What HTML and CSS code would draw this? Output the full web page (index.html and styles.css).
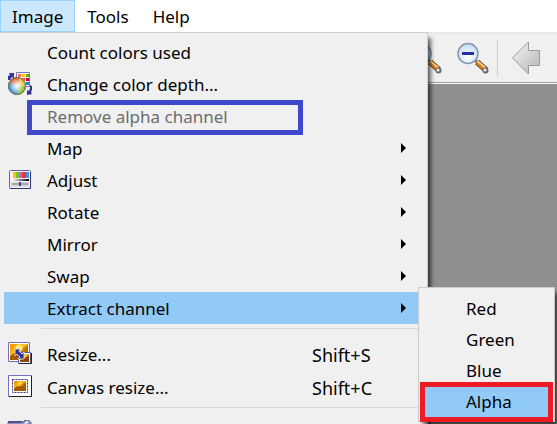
FILE: index.html
```html
<!DOCTYPE html>
<html lang="en">
<head>
<meta charset="utf-8">
<title>Image menu</title>
<link rel="stylesheet" href="styles.css">
</head>
<body>
<svg class="defs" aria-hidden="true">
  <defs>
    <linearGradient id="gold" x1="0" y1="0" x2="1" y2="1"><stop offset="0" stop-color="#f08c00"/><stop offset=".45" stop-color="#ffc61a"/><stop offset=".55" stop-color="#c87800"/><stop offset="1" stop-color="#7c3c00"/></linearGradient>
    <linearGradient id="silver" x1="0" y1="0" x2="1" y2="1"><stop offset="0" stop-color="#f6f6f6"/><stop offset="1" stop-color="#b4b4b4"/></linearGradient>
    <linearGradient id="ramp"><stop offset="0" stop-color="#fff"/><stop offset="1" stop-color="#000"/></linearGradient>
    <radialGradient id="lens" cx=".5" cy=".65" r=".6"><stop offset="0" stop-color="#fff"/><stop offset="1" stop-color="#c3dff5"/></radialGradient>
    <radialGradient id="shine" cx=".5" cy=".5" r=".5"><stop offset="0" stop-color="#fff"/><stop offset=".3" stop-color="#fff" stop-opacity=".75"/><stop offset="1" stop-color="#fff" stop-opacity="0"/></radialGradient>
    <symbol id="magnifier" viewBox="0 0 32 32">
      <path d="M18 18L22 22" stroke="#777" stroke-width="3"/>
      <path d="M20 20L29 28" stroke="#7a4a18" stroke-width="6"/>
      <path d="M20 20L28 27" stroke="#d98020" stroke-width="4"/>
      <path d="M20.500 19L28 25.500" stroke="#ffe0a8" stroke-width="1.500"/>
      <circle cx="28.500" cy="28.500" r="3" fill="#666b70"/><circle cx="28" cy="28" r="1.500" fill="#eee"/>
      <circle cx="11" cy="11.500" r="10" fill="url(#lens)" stroke="#8794a8" stroke-width="1.500"/>
      <path d="M5 11.500h12" stroke="#2c2c9c" stroke-width="3"/>
    </symbol>
  </defs>
</svg>
<nav class="menubar">
  <button class="menubar-item is-open">Image</button>
  <button class="menubar-item">Tools</button>
  <button class="menubar-item">Help</button>
  <ul class="menu">
    <li><button class="item"><span class="label">Count colors used</span></button></li>
    <li><button class="item"><svg class="icon" viewBox="0 0 24 24">
      <path d="M8.500 .5h13v14h-13z" fill="#fff" stroke="#7475b5"/>
      <path d="M10 2h3v3h-3z" fill="#ff6a5a"/><path d="M14 2h3v3h-3z" fill="#ffc20e"/><path d="M18 2h3v3h-3z" fill="#62ae12"/>
      <path d="M10 6h3v3h-3z" fill="#ffae92"/><path d="M14 6h3v3h-3z" fill="#f44"/><path d="M18 6h3v3h-3z" fill="#c00032"/>
      <path d="M18 10h3v3h-3z" fill="#247bd0"/>
      <circle cx="9" cy="14" r="9" fill="#d6b02c"/>
      <path d="M9 14L1 10A9 9 0 0 1 12 5.500z" fill="#d85a20"/><path d="M9 14L12 5.500A9 9 0 0 1 18 14z" fill="#dfb52f"/>
      <path d="M9 14h9a9 9 0 0 1-9 9z" fill="#77b52b"/><path d="M9 14v9a9 9 0 0 1-8-13z" fill="#3a8ccb"/>
      <circle cx="9" cy="14" r="8.500" fill="url(#shine)" stroke="#77705a"/>
      <path d="M0 8V4l2-1-1-2h5v5L4 5 2 8zM19 23v-5l2 1 1-3V13l2 1v4l-1 2 1 2z" fill="#33359c"/>
    </svg><span class="label">Change color depth...</span></button></li>
    <li class="marked"><button class="item" disabled><span class="label">Remove alpha channel</span></button></li>
    <li><button class="item"><span class="label">Map</span><svg class="arrow" viewBox="0 0 5 10"><path d="M0 0l5 5-5 5z"/></svg></button></li>
    <li><button class="item"><svg class="icon" viewBox="0 0 24 24">
      <rect x="1.500" y="2.500" width="21" height="18" rx="1" fill="#f2f2f6" stroke="#6163a8"/>
      <path d="M2 20.500h20.500V4" fill="none" stroke="#303275"/>
      <path d="M5 4h3v6H5z" fill="#ffc400"/><path d="M8 4h3v6H8z" fill="#71c42d"/><path d="M11 4h3v6h-3z" fill="#d35bd8"/><path d="M14 4h4v6h-4z" fill="#ec3340"/><path d="M18 4h3v6h-3z" fill="#3c9bdc"/>
      <path d="M4 11h17v2H4z" fill="url(#ramp)"/><path d="M3 14h18v5H3z" fill="#d8d8d8"/><path d="M4 16h16" stroke="#777"/><path d="M11 14h2v4h-2z" fill="#3f43a8"/>
    </svg><span class="label">Adjust</span><svg class="arrow" viewBox="0 0 5 10"><path d="M0 0l5 5-5 5z"/></svg></button></li>
    <li><button class="item"><span class="label">Rotate</span><svg class="arrow" viewBox="0 0 5 10"><path d="M0 0l5 5-5 5z"/></svg></button></li>
    <li><button class="item"><span class="label">Mirror</span><svg class="arrow" viewBox="0 0 5 10"><path d="M0 0l5 5-5 5z"/></svg></button></li>
    <li><button class="item"><span class="label">Swap</span><svg class="arrow" viewBox="0 0 5 10"><path d="M0 0l5 5-5 5z"/></svg></button></li>
    <li class="parent"><button class="item is-active"><span class="label">Extract channel</span><svg class="arrow" viewBox="0 0 5 10"><path d="M0 0l5 5-5 5z"/></svg></button>
      <ul class="submenu">
        <li><button class="item">Red</button></li>
        <li><button class="item">Green</button></li>
        <li><button class="item">Blue</button></li>
        <li class="marked-red"><button class="item is-active">Alpha</button></li>
      </ul>
    </li>
    <li class="separator"></li>
    <li><button class="item tall"><svg class="icon" viewBox="0 0 24 24">
      <path d="M.5 .5h21v19H.5z" fill="#fff" stroke="#7071b4"/><path d="M2 2h18v16H2z" fill="url(#gold)"/>
      <circle cx="11" cy="6" r="3.500" fill="#ffe97a"/><path d="M2 14l6-4 4 3v5H2z" fill="#a55a00"/>
      <path d="M10.500 10.500h12v11h-12z" fill="#fff" stroke="#55579f"/><path d="M11 21.500h12.500V11" fill="none" stroke="#222"/>
      <path d="M12 12h9v8h-9z" fill="url(#gold)"/><path d="M12 18l5-2 4-2v6h-9z" fill="#8b4700"/>
      <path d="M7 7h6l-2 2 3 3 2-2v7h-6l2-2-3-3-2 2z" fill="#30349c" stroke="#fff" stroke-width=".7"/>
    </svg><span class="label">Resize...</span><kbd>Shift+S</kbd></button></li>
    <li><button class="item tall"><svg class="icon" viewBox="0 0 24 24">
      <path d="M.5 .5h23v21H.5z" fill="#fff" stroke="#7071b4"/><path d="M1 21.500h22.500V1" fill="none" stroke="#222"/>
      <path d="M4.500 4.500h15v13h-15z" fill="none" stroke="#30328e" stroke-dasharray="2 1"/>
      <path d="M6 6h12v10H6z" fill="url(#gold)"/><path d="M6 13l4-2 3 1 5-3v7H6z" fill="#a65a00"/><circle cx="12" cy="8" r="1.500" fill="#ffe05a"/>
    </svg><span class="label">Canvas resize...</span><kbd>Shift+C</kbd></button></li>
    <li class="separator"></li>
    <li><button class="item tall" aria-label="More"><svg class="icon" viewBox="0 0 24 24">
      <path d="M0 1.500h14l3-2h4l2 2v15H0z" fill="#9294c4" stroke="#55568c"/><path d="M0 .5h14" stroke="#4b4c84"/><path d="M17 3l3-3" stroke="#eee" stroke-width="2"/>
    </svg></button></li>
  </ul>
</nav>
<main class="workspace">
  <div class="toolbar">
    <button class="tool" aria-label="Zoom in"><svg viewBox="0 0 32 32"><use href="#magnifier"/></svg></button>
    <button class="tool" aria-label="Zoom out"><svg viewBox="0 0 32 32"><use href="#magnifier"/></svg></button>
    <span class="divider"></span>
    <button class="tool back" aria-label="Previous"><svg viewBox="0 0 28 34"><path d="M.5 17L16.500 1v8.500h11v15h-11V33z" fill="url(#silver)" stroke="#999"/></svg></button>
  </div>
  <div class="canvas"></div>
</main>
</body>
</html>
```
FILE: styles.css
```css
*, *::after { box-sizing: border-box; }

body {
  margin: 0;
  min-height: 100vh;
  overflow: hidden;
  display: flex;
  flex-direction: column;
  background: #fff;
  color: #000;
  font: 17px/24px "Noto Sans", "Open Sans", sans-serif;
}

button {
  font: inherit;
  color: inherit;
  border: 0;
  background: none;
  padding: 0;
  margin: 0;
}

ul { list-style: none; margin: 0; padding: 0; }

svg { display: block; overflow: visible; }

.defs { position: absolute; width: 0; height: 0; }

.menubar {
  position: relative;
  z-index: 1;
  display: flex;
  height: 32px;
  background: #fff;
}

.menubar-item {
  padding: 2px 11px 0;
  border: 1px solid transparent;
}

.menubar-item.is-open {
  background: #cce8ff;
  border-color: #99d1ff;
}

.menu {
  position: absolute;
  top: 100%;
  left: 0;
  width: 428px;
  padding: 3px 0 4px 4px;
  background: #f0f0f0;
  border: 1px solid #ccc;
  border-left: 0;
  box-shadow: 4px 5px 4px -1px rgba(0, 0, 0, 0.6);
}

.item {
  display: flex;
  align-items: center;
  width: 100%;
  height: 32px;
  padding: 0 21px 0 43px;
  text-align: left;
}

.item.tall { height: 33px; }
.item.is-active { background: #91c9f7; }
.item:disabled { color: #6d6d6d; }

.label { flex: 1; padding-top: 2px; }

.icon {
  width: 24px;
  height: 24px;
  margin: 0 15px 0 -39px;
}

.arrow { width: 5px; height: 10px; }

kbd {
  width: 94px;
  padding-top: 2px;
  font: inherit;
  font-size: 18px;
}

.separator {
  height: 1px;
  margin: 4px 0 8px 37px;
  background: #d7d7d7;
}

.marked, .parent, .marked-red { position: relative; }

.marked::after {
  content: "";
  position: absolute;
  top: 0;
  left: 23px;
  width: 276px;
  height: 35px;
  border: 5px solid #3f48cc;
}

.submenu {
  position: absolute;
  z-index: 1;
  top: -5px;
  left: 414px;
  width: 137px;
  padding: 5px 3px 4px;
  background: #f0f0f0;
  border: 1px solid #ccc;
  box-shadow: 4px 5px 4px -1px rgba(0, 0, 0, 0.6);
}

.submenu .item { height: 31px; padding-left: 44px; }

.marked-red::after {
  content: "";
  position: absolute;
  top: -4px;
  right: -2px;
  bottom: -5px;
  left: -2px;
  border: 5px solid #ed1c24;
}

.workspace {
  flex: 1;
  display: flex;
  flex-direction: column;
}

.toolbar {
  display: flex;
  align-items: center;
  justify-content: flex-end;
  height: 51px;
  padding-right: 17px;
  background: #f0f0f0;
  border-top: 2px solid #e8e8e8;
  border-bottom: 1px solid #a0a0a0;
}

.tool { width: 32px; height: 32px; margin-right: 15px; }
.tool + .divider { margin: 0 14px 0 -7px; }
.tool.back { width: 28px; height: 34px; margin: 0; }

.divider { width: 1px; height: 36px; background: #ccc; }

.canvas {
  flex: 1;
  background: #8f8f8f;
  border-top: 1px solid #f8f8f8;
}
```
